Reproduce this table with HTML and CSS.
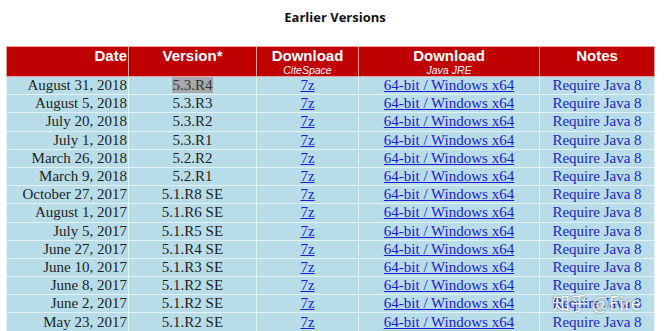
FILE: index.html
```html
<!DOCTYPE html>
<html>
<head>
<meta charset="utf-8">
<link rel="stylesheet" href="styles.css">
</head>
<body>
<h2 class="title">Earlier Versions</h2>
<table class="versions">
  <colgroup>
    <col class="c-date"><col class="c-ver"><col class="c-dl"><col class="c-jre"><col class="c-notes">
  </colgroup>
  <thead>
    <tr>
      <th class="left">Date</th>
      <th>Version*</th>
      <th>Download<span class="sub">CiteSpace</span></th>
      <th>Download<span class="sub">Java JRE</span></th>
      <th>Notes</th>
    </tr>
  </thead>
  <tbody>
    <tr><td class="date">August 31, 2018</td><td><span class="hl">5.3.R4</span></td><td><a href="#">7z</a></td><td><a href="#">64-bit / Windows x64</a></td><td class="note">Require Java 8</td></tr>
    <tr><td class="date">August 5, 2018</td><td>5.3.R3</td><td><a href="#">7z</a></td><td><a href="#">64-bit / Windows x64</a></td><td class="note">Require Java 8</td></tr>
    <tr><td class="date">July 20, 2018</td><td>5.3.R2</td><td><a href="#">7z</a></td><td><a href="#">64-bit / Windows x64</a></td><td class="note">Require Java 8</td></tr>
    <tr><td class="date">July 1, 2018</td><td>5.3.R1</td><td><a href="#">7z</a></td><td><a href="#">64-bit / Windows x64</a></td><td class="note">Require Java 8</td></tr>
    <tr><td class="date">March 26, 2018</td><td>5.2.R2</td><td><a href="#">7z</a></td><td><a href="#">64-bit / Windows x64</a></td><td class="note">Require Java 8</td></tr>
    <tr><td class="date">March 9, 2018</td><td>5.2.R1</td><td><a href="#">7z</a></td><td><a href="#">64-bit / Windows x64</a></td><td class="note">Require Java 8</td></tr>
    <tr><td class="date">October 27, 2017</td><td>5.1.R8 SE</td><td><a href="#">7z</a></td><td><a href="#">64-bit / Windows x64</a></td><td class="note">Require Java 8</td></tr>
    <tr><td class="date">August 1, 2017</td><td>5.1.R6 SE</td><td><a href="#">7z</a></td><td><a href="#">64-bit / Windows x64</a></td><td class="note">Require Java 8</td></tr>
    <tr><td class="date">July 5, 2017</td><td>5.1.R5 SE</td><td><a href="#">7z</a></td><td><a href="#">64-bit / Windows x64</a></td><td class="note">Require Java 8</td></tr>
    <tr><td class="date">June 27, 2017</td><td>5.1.R4 SE</td><td><a href="#">7z</a></td><td><a href="#">64-bit / Windows x64</a></td><td class="note">Require Java 8</td></tr>
    <tr><td class="date">June 10, 2017</td><td>5.1.R3 SE</td><td><a href="#">7z</a></td><td><a href="#">64-bit / Windows x64</a></td><td class="note">Require Java 8</td></tr>
    <tr><td class="date">June 8, 2017</td><td>5.1.R2 SE</td><td><a href="#">7z</a></td><td><a href="#">64-bit / Windows x64</a></td><td class="note">Require Java 8</td></tr>
    <tr><td class="date">June 2, 2017</td><td>5.1.R2 SE</td><td><a href="#">7z</a></td><td><a href="#">64-bit / Windows x64</a></td><td class="note">Require Java 8</td></tr>
    <tr><td class="date">May 23, 2017</td><td>5.1.R2 SE</td><td><a href="#">7z</a></td><td><a href="#">64-bit / Windows x64</a></td><td class="note">Require Java 8</td></tr>
  </tbody>
</table>
<div class="watermark">知乎 @Fire</div>
</body>
</html>
```

FILE: styles.css
```css
html, body {
  margin: 0;
  padding: 0;
  background: #ffffff;
  overflow: hidden;
}
body {
  width: 670px;
  height: 331px;
  position: relative;
}
.title {
  margin: 0;
  padding-top: 9px;
  height: 37px;
  box-sizing: border-box;
  text-align: center;
  font-family: "Open Sans", "Liberation Sans", sans-serif;
  font-weight: bold;
  font-size: 13px;
  color: #111;
  line-height: 17px;
}
.versions {
  margin-left: 6px;
  margin-top: 9px;
  width: 648px;
  border-collapse: collapse;
  table-layout: fixed;
  font-family: "Liberation Serif", "Times New Roman", serif;
  font-size: 15px;
}
.c-date { width: 122px; }
.c-ver { width: 128px; }
.c-dl { width: 102px; }
.c-jre { width: 181px; }
.c-notes { width: 115px; }
.versions th {
  background: #c00000;
  color: #ffffff;
  font-family: "Liberation Sans", Arial, sans-serif;
  font-weight: bold;
  font-size: 15px;
  line-height: 17px;
  height: 30px;
  padding: 0 1px;
  vertical-align: top;
  text-align: center;
  border: 1px solid #e8a0a0;
  box-sizing: border-box;
}
.versions th.left {
  text-align: right;
}
.sub {
  display: block;
  font-weight: normal;
  font-style: italic;
  font-size: 10.5px;
  line-height: 12px;
}
.versions td {
  background: #b8dde8;
  color: #1e1e1e;
  text-align: center;
  border: 1px solid #e4f1f5;
  padding: 0 1px;
  height: 18.2px;
  line-height: 17px;
  white-space: nowrap;
  overflow: hidden;
  box-sizing: border-box;
}
.versions td.date {
  text-align: right;
}
.versions td.note {
  color: #2323c8;
}
.versions a {
  color: #1a1ad0;
  text-decoration: underline;
}
.hl {
  background: #a6a9ab;
  color: #333;
}
.watermark {
  position: absolute;
  left: 552px;
  top: 289px;
  font-family: "Noto Sans CJK SC", "Noto Sans", sans-serif;
  font-size: 18px;
  color: rgba(255, 255, 255, 0.92);
  text-shadow: 0 0 2px rgba(0, 0, 0, 0.5);
}
```
